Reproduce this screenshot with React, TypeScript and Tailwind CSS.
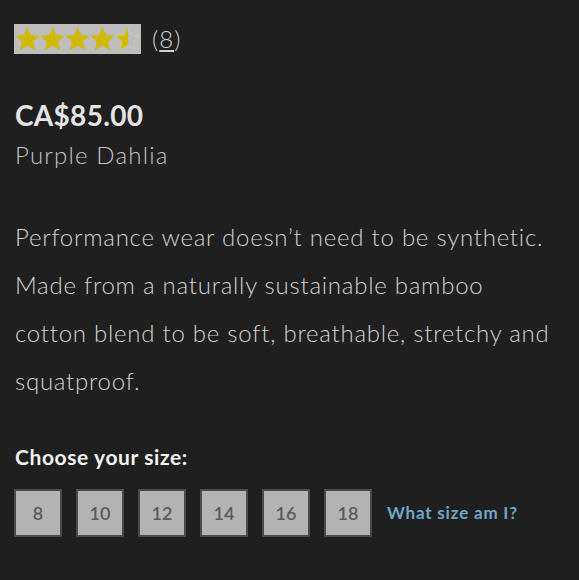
import { useState } from 'react';

const sizes = ['8', '10', '12', '14', '16', '18'];

function Star({ fill }: { fill: 'full' | 'half' }) {
    return (
        <svg width="25" height="26" viewBox="1 1 22 22">
            <defs>
                <linearGradient id="half-star">
                    <stop offset="50%" stopColor="#d1b80a" />
                    <stop offset="50%" stopColor="transparent" />
                </linearGradient>
            </defs>
            <path
                d="M12 1.5l3.2 7 7.6.7-5.8 5.1 1.8 7.5L12 17.9l-6.8 3.9 1.8-7.5-5.8-5.1 7.6-.7z"
                fill={fill === 'full' ? '#d1b80a' : 'url(#half-star)'}
                stroke={fill === 'full' ? 'none' : '#dcd3a0'}
                strokeWidth="0.5"
            />
        </svg>
    );
}

export default function App() {
    const [picked, setPicked] = useState<string | null>(null);

    return (
        <div className="min-h-[580px] w-[579px] bg-[#1f1f1f] pl-[15px] pr-[4px] pt-[24px] font-['Lato',sans-serif] text-[#d6d6d6]">
            {/* Note des avis */}
            <div className="flex items-center gap-[11px]">
                <div className="flex h-[30px] w-[127px] items-center gap-0 bg-[#bdbdbd] pl-[1px] -ml-[1px]">
                    {[0, 1, 2, 3].map((i) => (
                        <Star key={i} fill="full" />
                    ))}
                    <Star fill="half" />
                </div>
                <span className="text-[24px] font-light leading-none tracking-[1px] text-[#cfcfcf]">
                    (<span className="underline underline-offset-2">8</span>)
                </span>
            </div>

            {/* Prix + couleur */}
            <div className="mt-[47px] text-[28px] font-bold leading-none tracking-[0.3px] text-[#e4e4e4]">CA$85.00</div>
            <div className="mt-[14px] text-[24px] font-light leading-none tracking-[1.2px] text-[#c4c4c4]">Purple Dahlia</div>

            {/* Description : coupures comme sur la fiche */}
            <p className="mt-[46px] text-[24px] font-light leading-[48px] tracking-[0.75px] text-[#d2d2d2]">
                Performance wear doesn’t need to be synthetic.
                <br />
                Made from a naturally sustainable bamboo
                <br />
                cotton blend to be soft, breathable, stretchy and
                <br />
                squatproof.
            </p>

            {/* Tailles */}
            <div className="mt-[41px] text-[21px] font-bold leading-none tracking-[0.6px] text-[#f2f2f2]">Choose your size:</div>
            <div className="mt-[22px] flex items-center gap-[14px] -ml-[1px]">
                {sizes.map((s) => (
                    <button
                        key={s}
                        onClick={() => setPicked(s)}
                        className={`flex h-[48px] w-[48px] items-center justify-center border-2 border-[#4a4a4a] text-[18px] font-semibold text-[#5a5a5a] ${picked === s ? 'bg-[#e0e0e0]' : 'bg-[#b3b3b3]'}`}
                    >
                        {s}
                    </button>
                ))}
                <a href="#" className="ml-[1px] text-[17px] font-bold tracking-[0.8px] text-[#6ea7c9]">
                    What size am I?
                </a>
            </div>
        </div>
    );
}
